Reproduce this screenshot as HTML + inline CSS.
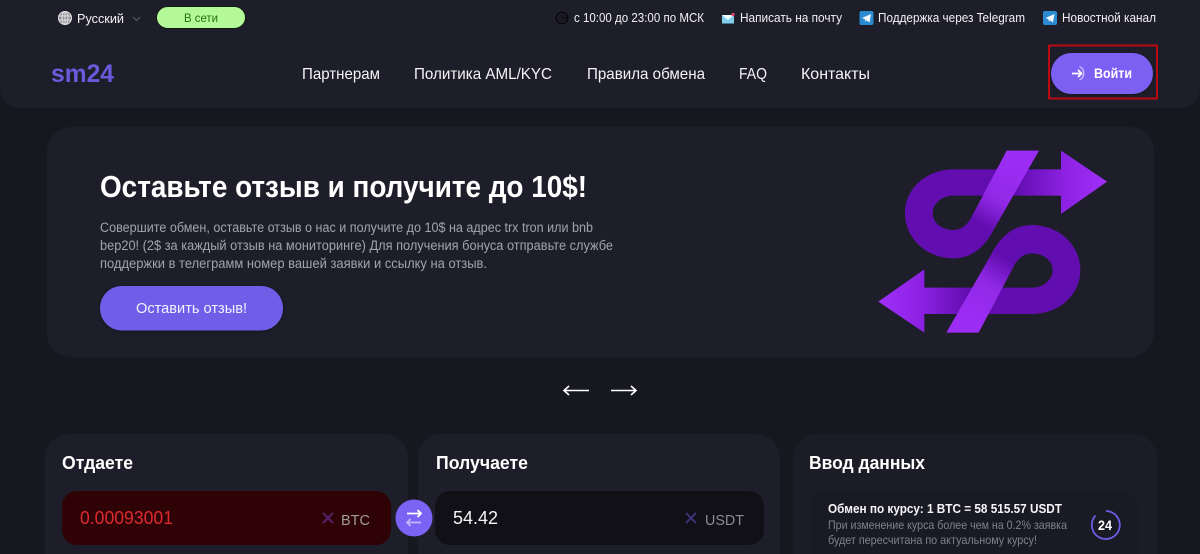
<!DOCTYPE html>
<html lang="ru">
<head>
<meta charset="utf-8">
<title>sm24</title>
<style>
html,body{margin:0;padding:0;width:1200px;height:554px;overflow:hidden;background:#171720;}
svg{display:block;}
text{font-family:"Liberation Sans","Noto Sans CJK JP",sans-serif;}
</style>
</head>
<body>
<svg width="1200" height="554" viewBox="0 0 1200 554" xmlns="http://www.w3.org/2000/svg">
<defs>
<linearGradient id="shaft" gradientUnits="userSpaceOnUse" x1="470" y1="0" x2="740" y2="0">
<stop offset="0" stop-color="#620db0"/><stop offset=".5" stop-color="#8a20e0"/><stop offset="1" stop-color="#a030fa"/>
</linearGradient>
<linearGradient id="diag" gradientUnits="userSpaceOnUse" x1="480" y1="100" x2="372" y2="290">
<stop offset="0" stop-color="#9c2df5"/><stop offset=".6" stop-color="#9029e6"/><stop offset="1" stop-color="#620db0"/>
</linearGradient>
<filter id="sh" x="-20%" y="-20%" width="140%" height="160%"><feDropShadow dx="0" dy="1" stdDeviation="2" flood-color="#000" flood-opacity=".3"/></filter>
<g id="half">
<path d="M603 118V62L741 155L603 252V197H280C244 197 218 222 218 250C218 278 246 300 280 300C300 300 316 290 328 272L360 240L410 270L398 306C368 358 330 385 280 385C200 385 135 325 135 250C135 175 200 118 280 118Z" fill="url(#shaft)"/>
<path d="M440 62H537L398 304L332 266Z" fill="url(#diag)"/>
</g>
</defs>

<rect width="1200" height="554" fill="#171720"/>
<!-- header -->
<path d="M0 0H1200V88A20 20 0 0 1 1180 108H20A20 20 0 0 1 0 88Z" fill="#1e1e2a"/>

<!-- language -->
<g fill="none" stroke="#e2e2e6" stroke-width="1">
<circle cx="65" cy="18" r="6.500" fill="#8d8d93"/>
<ellipse cx="65" cy="18" rx="3" ry="6.500"/>
<path d="M59 16H71M59 20H71M65 12V24"/>
</g>
<text x="77" y="23" font-size="13" fill="#f2f2f4" textLength="47" lengthAdjust="spacingAndGlyphs">Русский</text>
<path d="M133 17L136.500 20.500L140 17" fill="none" stroke="#5f5f68" stroke-width="1"/>
<rect x="156.500" y="6.500" width="89" height="22" rx="11" fill="#b3f99a" stroke="#0d1a0c" stroke-width="1"/>
<text x="184" y="22" font-size="12" fill="#23720f" textLength="34" lengthAdjust="spacingAndGlyphs">В сети</text>

<!-- top right -->
<circle cx="562" cy="18" r="5.800" fill="#1a1a24" stroke="#06060a" stroke-width="1.200"/>
<path d="M562 18H567.500" stroke="#06060a" stroke-width="1" fill="none"/>
<text x="574" y="22" font-size="12.500" fill="#f0f0f3" textLength="130" lengthAdjust="spacingAndGlyphs">с 10:00 до 23:00 по МСК</text>
<rect x="722" y="15" width="12" height="8.500" fill="#7fd0ee"/>
<path d="M722 15H734L728 20Z" fill="#f2fbff"/>
<circle cx="733" cy="14.500" r="1.600" fill="#e8466e"/>
<text x="740" y="22" font-size="12.500" fill="#f0f0f3" textLength="102" lengthAdjust="spacingAndGlyphs">Написать на почту</text>
<rect x="859.500" y="11" width="14" height="14" rx="2" fill="#2a8ad2"/>
<path d="M862 18L871 14L869.500 22.500L866.500 20.300L865.300 21.800L865 19.300Z" fill="#f2f8fc"/>
<text x="878" y="22" font-size="12.500" fill="#f0f0f3" textLength="147" lengthAdjust="spacingAndGlyphs">Поддержка через Telegram</text>
<rect x="1043" y="11" width="14" height="14" rx="2" fill="#2a8ad2"/>
<path d="M1045.500 18L1054.500 14L1053 22.500L1050 20.300L1048.800 21.800L1048.500 19.300Z" fill="#f2f8fc"/>
<text x="1062" y="22" font-size="12.500" fill="#f0f0f3" textLength="94" lengthAdjust="spacingAndGlyphs">Новостной канал</text>

<!-- logo + nav -->
<text x="51" y="82" font-size="25" font-weight="700" fill="#6a5bdd" textLength="63" lengthAdjust="spacingAndGlyphs">sm24</text>
<g font-size="16" fill="#f4f4f6">
<text x="302" y="79" textLength="78" lengthAdjust="spacingAndGlyphs">Партнерам</text>
<text x="414" y="79" textLength="138" lengthAdjust="spacingAndGlyphs">Политика AML/KYC</text>
<text x="587" y="79" textLength="118" lengthAdjust="spacingAndGlyphs">Правила обмена</text>
<text x="739" y="79" textLength="28" lengthAdjust="spacingAndGlyphs">FAQ</text>
<text x="801" y="79" textLength="69" lengthAdjust="spacingAndGlyphs">Контакты</text>
</g>

<!-- login -->
<rect x="1051" y="53" width="102" height="41" rx="20.500" fill="#7b60f3" filter="url(#sh)"/>
<path d="M1072 73.500H1081.500M1078 70L1081.500 73.500L1078 77" fill="none" stroke="#fff" stroke-width="1.700"/>
<path d="M1079.500 66.500A7.500 7.500 0 0 1 1079.500 80" fill="none" stroke="#c6b8fb" stroke-width="1.500"/>
<text x="1094" y="78" font-size="13.500" font-weight="700" fill="#fff" textLength="38" lengthAdjust="spacingAndGlyphs">Войти</text>
<rect x="1049" y="45.500" width="108" height="53" fill="none" stroke="#bb0a10" stroke-width="2"/>

<!-- hero -->
<rect x="47" y="127" width="1107" height="230" rx="24" fill="#1e1e2a"/>
<text x="100" y="197" font-size="31" font-weight="700" fill="#fff" textLength="487" lengthAdjust="spacingAndGlyphs">Оставьте отзыв и получите до 10$!</text>
<g font-size="13.500" fill="#a3a3ab">
<text x="100" y="232" textLength="493" lengthAdjust="spacingAndGlyphs">Совершите обмен, оставьте отзыв о нас и получите до 10$ на адрес trx tron или bnb</text>
<text x="100" y="250" textLength="513" lengthAdjust="spacingAndGlyphs">bep20! (2$ за каждый отзыв на мониторинге) Для получения бонуса отправьте службе</text>
<text x="100" y="268" textLength="387" lengthAdjust="spacingAndGlyphs">поддержки в телеграмм номер вашей заявки и ссылку на отзыв.</text>
</g>
<rect x="100" y="286" width="183" height="44.500" rx="22" fill="#6f5de8" filter="url(#sh)"/>
<text x="136" y="313" font-size="15" fill="#f4f2ff" textLength="111" lengthAdjust="spacingAndGlyphs">Оставить отзыв!</text>

<!-- hero art -->
<g transform="translate(860 130) scale(.33333)">
<use href="#half"/>
<use href="#half" transform="rotate(180 398 335)"/>
</g>

<!-- slider arrows -->
<g fill="none" stroke="#fff" stroke-width="1.600">
<path d="M564 390.500H589M569 386L564 390.500L569 395"/>
<path d="M611 390.500H636M631 386L636 390.500L631 395"/>
</g>

<!-- cards -->
<path d="M45 554V458A24 24 0 0 1 69 434H384A24 24 0 0 1 408 458V554Z" fill="#1e1e2a"/>
<path d="M418 554V458A24 24 0 0 1 442 434H756A24 24 0 0 1 780 458V554Z" fill="#1e1e2a"/>
<path d="M793 554V458A24 24 0 0 1 817 434H1133A24 24 0 0 1 1157 458V554Z" fill="#1c1c27"/>

<g font-size="18" font-weight="700" fill="#fff">
<text x="62" y="469" textLength="71" lengthAdjust="spacingAndGlyphs">Отдаете</text>
<text x="436" y="469" textLength="92" lengthAdjust="spacingAndGlyphs">Получаете</text>
<text x="809" y="469" textLength="116" lengthAdjust="spacingAndGlyphs">Ввод данных</text>
</g>

<!-- input 1 -->
<rect x="62" y="491" width="329" height="54" rx="15" fill="#2f0205"/>
<text x="80" y="524" font-size="18" fill="#dc2a2f" textLength="93" lengthAdjust="spacingAndGlyphs">0.00093001</text>
<path d="M323 513L333 523M333 513L323 523" stroke="#56206e" stroke-width="2" fill="none"/>
<text x="341" y="525" font-size="14.500" fill="#a39c9c" textLength="29" lengthAdjust="spacingAndGlyphs">BTC</text>

<!-- input 2 -->
<rect x="435" y="491" width="329" height="54" rx="15" fill="#101016"/>
<text x="453" y="524" font-size="18" fill="#f4f4f6" textLength="45" lengthAdjust="spacingAndGlyphs">54.42</text>
<path d="M686 513L696 523M696 513L686 523" stroke="#3d2f7a" stroke-width="2" fill="none"/>
<text x="705" y="525" font-size="14.500" fill="#8b8b90" textLength="39" lengthAdjust="spacingAndGlyphs">USDT</text>

<!-- swap -->
<circle cx="414" cy="518" r="18.500" fill="#7b63f5"/>
<path d="M407 513.500H421M417.500 510L421 513.500L417.500 517" fill="none" stroke="#fff" stroke-width="1.800"/>
<path d="M421 522.500H407M410.500 519L407 522.500L410.500 526" fill="none" stroke="#c4b6fb" stroke-width="1.800"/>

<!-- rate panel -->
<path d="M810 554V507A16 16 0 0 1 826 491H1122A16 16 0 0 1 1138 507V554Z" fill="#1a1a24"/>
<text x="828" y="513" font-size="13" font-weight="700" fill="#f6f6f8" textLength="234" lengthAdjust="spacingAndGlyphs">Обмен по курсу: 1 BTC = 58 515.57 USDT</text>
<g font-size="12" fill="#80808a">
<text x="828" y="529" textLength="239" lengthAdjust="spacingAndGlyphs">При изменение курса более чем на 0.2% заявка</text>
<text x="828" y="544" textLength="209" lengthAdjust="spacingAndGlyphs">будет пересчитана по актуальному курсу!</text>
</g>
<path d="M1106 511A14 14 0 1 1 1095.500 515.500" fill="none" stroke="#6f5de8" stroke-width="1.800"/>
<text x="1098" y="530" font-size="13.500" font-weight="700" fill="#fff" textLength="14" lengthAdjust="spacingAndGlyphs">24</text>
</svg>
</body>
</html>
